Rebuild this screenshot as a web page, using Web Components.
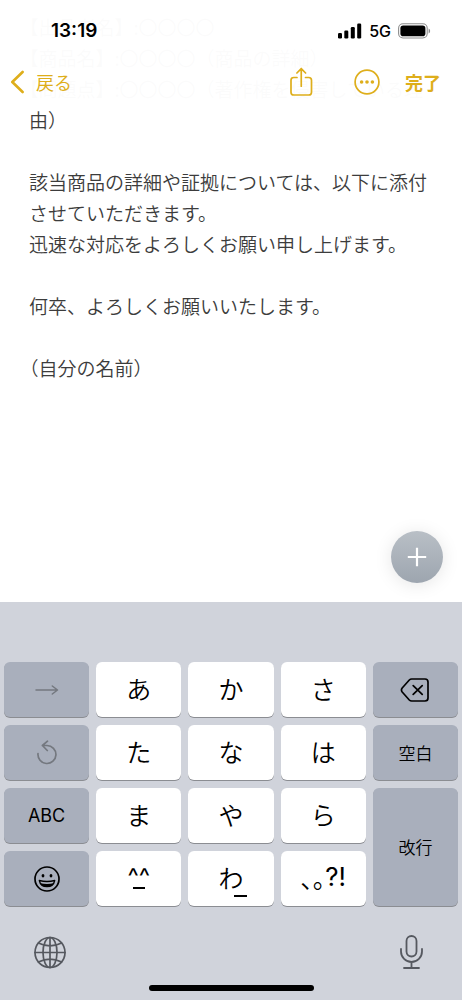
<!DOCTYPE html>
<html lang="ja">
<head>
<meta charset="utf-8">
<meta name="viewport" content="width=device-width, initial-scale=1">
<title>メモ</title>
<style>
  body { margin: 0; background: #fff; font-family: "Inter", "Noto Sans CJK JP", sans-serif; color: #000; }
</style>
</head>
<body>
<notes-app></notes-app>

<template id="status-bar">
  <style>
    :host { display: flex; align-items: center; justify-content: space-between; box-sizing: border-box; height: 60px; padding: 2px 31px 0 51px; }
    time { font-size: 19px; font-weight: 600; line-height: 24px; }
    .radio { display: flex; align-items: center; gap: 7px; font-size: 16px; font-weight: 500; line-height: 24px; }
    svg { display: block; }
  </style>
  <time>13:19</time>
  <div class="radio">
    <svg width="24" height="16" viewBox="0 0 24 16" role="img" aria-label="電波"><rect x="0" y="10" width="4" height="5.5" rx="1.2"/><rect x="6.3" y="7.5" width="4" height="8" rx="1.2"/><rect x="12.8" y="4" width="4" height="11.5" rx="1.2"/><rect x="19.2" y=".5" width="4" height="15" rx="1.2"/></svg>
    <span>5G</span>
    <svg width="33" height="16" viewBox="0 0 33 16" role="img" aria-label="電池"><rect x=".6" y=".8" width="28.6" height="14.2" rx="4.4" fill="none" stroke="#8d8d8d" stroke-width="1.1"/><rect x="2.4" y="2.6" width="25" height="10.6" rx="2.8"/><path d="M30.6 5.4c2 .8 2 4.200 0 5z" fill="#8d8d8d"/></svg>
  </div>
</template>

<template id="nav-bar">
  <style>
    :host { display: flex; align-items: center; justify-content: space-between; box-sizing: border-box; height: 44px; padding: 0 21px 0 10px; color: #deae1b; }
    button, a { display: flex; align-items: center; margin: 0; padding: 0; border: 0; background: none; color: inherit; font: 400 18px/26px "Noto Sans CJK JP", sans-serif; text-decoration: none; }
    .back { gap: 12px; }
    .actions { display: flex; align-items: center; gap: 25px; }
    .share { margin-right: 16px; }
    .done { font-weight: 700; }
    svg { display: block; fill: none; stroke: currentColor; stroke-linecap: round; stroke-linejoin: round; }
  </style>
  <a class="back" href="#"><svg width="14" height="24" viewBox="0 0 14 24" stroke-width="2.6"><path d="M12.600 2L2.300 12l10.300 10"/></svg>戻る</a>
  <div class="actions">
    <button class="share" type="button" aria-label="共有"><svg width="24" height="30" viewBox="0 0 24 30" stroke-width="1.7"><path d="M8 10.500H4.800Q2 10.500 2 13.300V25.200Q2 28 4.800 28H19.700Q22.500 28 22.500 25.200V13.300Q22.500 10.500 19.700 10.500H16.500M12.250 19.200V1.600M7.900 6l4.350-4.400L16.600 6"/></svg></button>
    <button type="button" aria-label="その他"><svg width="26" height="26" viewBox="0 0 26 26" stroke-width="1.7"><circle cx="13" cy="13" r="11.900"/><g fill="currentColor" stroke="none"><circle cx="7.600" cy="13" r="1.800"/><circle cx="13" cy="13" r="1.800"/><circle cx="18.400" cy="13" r="1.800"/></g></svg></button>
    <button class="done" type="button">完了</button>
  </div>
</template>

<template id="note-editor">
  <style>
    :host { display: flex; flex: 1; position: relative; }
    textarea { flex: 1; display: block; box-sizing: border-box; min-width: 0; min-height: 400px; margin: 0; padding: 11px 20px 0 29px; border: 0; outline: 0; resize: none; overflow: hidden; white-space: pre; background: #fff; color: #3c3c3c; font: 350 19px/31px "Noto Sans CJK JP", sans-serif; text-spacing-trim: trim-start; }
    .add { position: absolute; right: 19px; bottom: 19px; display: flex; align-items: center; justify-content: center; width: 52px; height: 52px; padding: 0; border: 0; border-radius: 50%; background: linear-gradient(#b9bfc6, #9da5af); box-shadow: 0 2px 18px rgba(0, 0, 0, .1); }
  </style>
  <textarea aria-label="メモ" spellcheck="false">
【出品者名】:〇〇〇〇
【商品名】:〇〇〇〇&#xFF08;商品の詳細&#xFF09;
【問題点】:〇〇〇〇&#xFF08;著作権を侵害している理
由&#xFF09;

該当商品の詳細や証拠については、以下に添付
させていただきます。
迅速な対応をよろしくお願い申し上げます。

何卒、よろしくお願いいたします。

&#xFF08;自分の名前&#xFF09;</textarea>
  <button class="add" type="button" aria-label="追加"><svg width="20" height="20" viewBox="0 0 20 20" stroke="#fff" stroke-width="2.200"><path d="M10 .8V19.200M.8 10H19.200"/></svg></button>
</template>

<template id="kana-key">
  <style>
    :host { display: flex; }
    :host([tall]) { grid-row: span 2; }
    button { flex: 1; display: flex; align-items: center; justify-content: center; min-width: 0; margin: 0; padding: 0 0 4px; border: 0; border-radius: 6px; background: #fff; box-shadow: 0 1px 0 #8b8d92; color: #000; font: 350 25px/36px "Noto Sans CJK JP", sans-serif; }
    :host([kind]) button { padding: 0; background: #a9afbc; }
    :host([kind="word"]) button { font-size: 17px; line-height: 24px; }
    :host([kind="latin"]) button { font: 400 18px/24px "Inter", sans-serif; }
    :host([kind="off"]) button { color: #74787f; }
  </style>
  <button type="button"><slot></slot></button>
</template>

<template id="kana-keyboard">
  <style>
    :host { display: block; padding: 60px 4px 0; background: #d0d3db; }
    .keys { display: grid; grid-template-columns: repeat(5, 1fr); grid-auto-rows: 55px; gap: 8px 7px; }
    svg { display: block; fill: none; stroke: currentColor; stroke-linecap: round; stroke-linejoin: round; }
    .mark { position: relative; display: block; }
    .mark::after { content: ""; position: absolute; height: 2px; background: #000; }
    .face { font: 400 24px/24px "Inter", sans-serif; }
    .face::after { left: 50%; bottom: 0; width: 12px; margin-left: -6px; }
    .wa::after { right: -3px; bottom: -2px; width: 13px; }
    .half { font-feature-settings: "halt"; }
    .latin { font: 400 26px/36px "Inter", sans-serif; }
    .tools { display: flex; justify-content: space-between; padding: 29px 30px 0; color: #55585f; }
    .tools button { display: block; padding: 0; border: 0; background: none; color: inherit; }
    .home { width: 165px; height: 6px; margin: 16px auto 0; border-radius: 3px; background: #000; }
    .foot { height: 9px; }
  </style>
  <div class="keys">
    <kana-key kind="off"><svg width="24" height="12" viewBox="0 0 24 12" stroke-width="1.500" role="img" aria-label="次へ"><path d="M1 6H22.500M17.300 2L22.500 6l-5.200 4"/></svg></kana-key>
    <kana-key>あ</kana-key>
    <kana-key>か</kana-key>
    <kana-key>さ</kana-key>
    <kana-key kind="icon"><svg width="30" height="24" viewBox="0 0 30 24" stroke-width="1.700" role="img" aria-label="削除"><path d="M11.700 1H25Q28 1 28 4V20Q28 23 25 23H11.700Q10.300 23 9.300 22L2.200 14Q.7 12 2.200 10L9.300 2Q10.300 1 11.700 1zM13.200 7.600l9 8.800M22.200 7.600l-9 8.800"/></svg></kana-key>

    <kana-key kind="off"><svg width="22" height="26" viewBox="0 0 22 26" stroke-width="1.700" role="img" aria-label="逆順"><path d="M2 13.500A9 9 0 1 0 11 5.500H6.400M11.500 1.200L6.400 5.500l4.900 5"/></svg></kana-key>
    <kana-key>た</kana-key>
    <kana-key>な</kana-key>
    <kana-key>は</kana-key>
    <kana-key kind="word">空白</kana-key>

    <kana-key kind="latin">ABC</kana-key>
    <kana-key>ま</kana-key>
    <kana-key>や</kana-key>
    <kana-key>ら</kana-key>
    <kana-key kind="word" tall>改行</kana-key>

    <kana-key kind="icon"><svg width="26" height="26" viewBox="0 0 26 26" stroke-width="1.700" role="img" aria-label="絵文字"><circle cx="13" cy="13" r="12"/><g fill="currentColor" stroke="none"><ellipse cx="9" cy="9.800" rx="1.400" ry="1.800"/><ellipse cx="17" cy="9.800" rx="1.400" ry="1.800"/></g><path d="M5.300 14.500Q13 16.500 20.700 14.500Q19.500 20.600 13 20.600T5.300 14.500z" stroke-width="1.300"/><path d="M6.300 17.200Q13 18.600 19.700 17.200Q17.600 20.600 13 20.600T6.300 17.200z" fill="currentColor" stroke="none"/></svg></kana-key>
    <kana-key><span class="mark face">^^</span></kana-key>
    <kana-key><span class="mark wa">わ</span></kana-key>
    <kana-key><span class="half">、。</span><span class="latin">?!</span></kana-key>
  </div>
  <div class="tools">
    <button type="button" aria-label="キーボード切替"><svg width="32" height="34" viewBox="0 0 32 34" stroke-width="1.700"><circle cx="16" cy="17.500" r="15"/><ellipse cx="16" cy="17.500" rx="7" ry="15"/><path d="M16 2.500v30M1 17.500h30M4.400 8Q16 13.800 27.600 8M4.400 27Q16 21.200 27.600 27"/></svg></button>
    <button type="button" aria-label="音声入力"><svg width="32" height="34" viewBox="0 0 32 34" stroke-width="1.800"><rect x="10.500" y="1" width="10" height="20.500" rx="5"/><path d="M5 14v2.500a10.500 10.500 0 0 0 21 0V14M15.500 27v6M8 33h15"/></svg></button>
  </div>
  <div class="home"></div>
  <div class="foot"></div>
</template>

<template id="notes-app">
  <style>
    :host { display: flex; flex-direction: column; position: relative; min-height: 100vh; }
    header { position: absolute; top: 0; left: 0; right: 0; z-index: 1; background: rgba(255, 255, 255, .98); }
  </style>
  <header>
    <status-bar></status-bar>
    <nav-bar></nav-bar>
  </header>
  <note-editor></note-editor>
  <kana-keyboard></kana-keyboard>
</template>

<script>
  class TemplateElement extends HTMLElement {
    constructor() {
      super();
      const template = document.getElementById(this.localName);
      this.attachShadow({ mode: "open" }).append(template.content.cloneNode(true));
    }
  }
  customElements.define("status-bar", class StatusBar extends TemplateElement {});
  customElements.define("nav-bar", class NavBar extends TemplateElement {});
  customElements.define("note-editor", class NoteEditor extends TemplateElement {});
  customElements.define("kana-key", class KanaKey extends TemplateElement {});
  customElements.define("kana-keyboard", class KanaKeyboard extends TemplateElement {});
  customElements.define("notes-app", class NotesApp extends TemplateElement {});
</script>
</body>
</html>
